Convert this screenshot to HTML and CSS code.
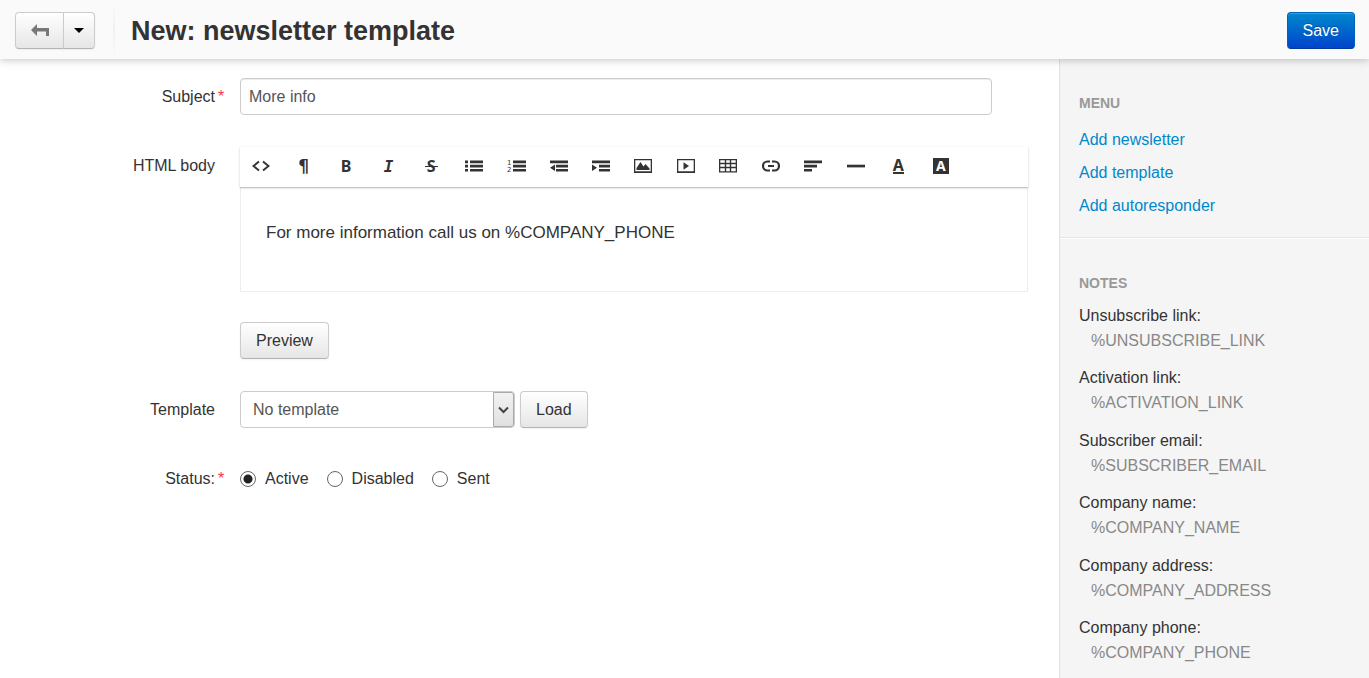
FILE: index.html
```html
<!DOCTYPE html>
<html lang="en">
<head>
<meta charset="utf-8">
<title>New: newsletter template</title>
<link rel="stylesheet" href="styles.css">
</head>
<body>
<header class="header">
  <div class="btn-group">
    <button class="btn btn-back" type="button" aria-label="Back"><svg width="18" height="14" viewBox="0 0 18 14"><path d="M0 6 6 0v4h12v8h-3V7.500H6V12z" fill="#777"/></svg></button>
    <button class="btn btn-caret" type="button" aria-label="More"><svg width="10" height="5" viewBox="0 0 10 5"><path d="M0 0h10L5 5z" fill="#000"/></svg></button>
  </div>
  <div class="separator"></div>
  <h1 class="title">New: newsletter template</h1>
  <button class="btn btn-primary" type="submit" form="template-form">Save</button>
</header>
<div class="layout">
  <main class="content">
    <form class="form" id="template-form">
      <div class="row">
        <label class="label" for="subject"><span>Subject</span><span class="required">*</span></label>
        <div class="field"><input class="input" id="subject" type="text" value="More info"></div>
      </div>
      <div class="row">
        <div class="label" id="body-label"><span>HTML body</span></div>
        <div class="field">
          <div class="toolbar" role="toolbar" aria-label="Formatting">
            <button class="tool" type="button" aria-label="HTML"><svg width="18" height="12" viewBox="0 0 18 12"><path d="M7 1.500 1.500 6 7 10.500M11 1.500 16.500 6 11 10.500" fill="none" stroke="#333" stroke-width="1.900"/></svg></button>
            <button class="tool tool-pilcrow" type="button" aria-label="Format">¶</button>
            <button class="tool tool-letter" type="button" aria-label="Bold">B</button>
            <button class="tool tool-letter tool-italic" type="button" aria-label="Italic">I</button>
            <button class="tool tool-letter" type="button" aria-label="Strikethrough"><span class="strike">S</span></button>
            <button class="tool" type="button" aria-label="Bulleted list"><svg width="18" height="12" viewBox="0 0 18 12"><path d="M0 .5h3v2.700H0zM0 4.700h3v2.700H0zM0 8.900h3v2.700H0zM5 .5h13v2.700H5zM5 4.700h13v2.700H5zM5 8.900h13v2.700H5z" fill="#333"/></svg></button>
            <button class="tool" type="button" aria-label="Numbered list"><svg class="numbered" width="19" height="12" viewBox="0 0 19 12"><path d="M6 .5h13v2.700H6zM6 4.700h13v2.700H6zM6 8.900h13v2.700H6z" fill="#333"/><text x="0" y="5">1</text><text x="0" y="12">2</text></svg></button>
            <button class="tool" type="button" aria-label="Outdent"><svg width="18" height="12" viewBox="0 0 18 12"><path d="M0 .5h18v2.700H0zM6 4.700h12v2.700H6zM6 8.900h12v2.700H6zM5 4.500v6.500L0 7.700z" fill="#333"/></svg></button>
            <button class="tool" type="button" aria-label="Indent"><svg width="18" height="12" viewBox="0 0 18 12"><path d="M0 .5h18v2.700H0zM7 4.700h11v2.700H7zM7 8.900h11v2.700H7zM0 4.500v6.500l5-3.300z" fill="#333"/></svg></button>
            <button class="tool" type="button" aria-label="Image"><svg width="18" height="14" viewBox="0 0 18 14"><path d="M0 0h18v14H0zM1.300 1.300v11h15.400v-11z" fill="#333" fill-rule="evenodd"/><path d="M2.500 11V9l4-6 3 4.500L11.500 5 15.500 9.500V11z" fill="#333"/></svg></button>
            <button class="tool" type="button" aria-label="Video"><svg width="18" height="14" viewBox="0 0 18 14"><path d="M0 0h18v14H0zM1.300 1.300v11h15.400v-11z" fill="#333" fill-rule="evenodd"/><path d="M6.500 3.300v7.400l5.500-3.700z" fill="#333"/></svg></button>
            <button class="tool" type="button" aria-label="Table"><svg width="18" height="14" viewBox="0 0 18 14"><path d="M.6.6h16.800v12.300H.6zM0 4.500h18M0 8.500h18M6.500 0v13M11.500 0v13" fill="none" stroke="#333" stroke-width="1.400"/></svg></button>
            <button class="tool" type="button" aria-label="Link"><svg width="18" height="12" viewBox="0 0 18 12"><path d="M8 1.500H5.500a4.500 4.500 0 0 0 0 9H8M10 1.500h2.500a4.500 4.500 0 0 1 0 9H10M6 6h6" fill="none" stroke="#333" stroke-width="2.200"/></svg></button>
            <button class="tool" type="button" aria-label="Alignment"><svg width="18" height="12" viewBox="0 0 18 12"><path d="M0 .5h18v2.700H0zM0 4.700h13v2.700H0zM0 8.900h8v2.700H0z" fill="#333"/></svg></button>
            <button class="tool" type="button" aria-label="Horizontal rule"><svg width="18" height="12" viewBox="0 0 18 12"><path d="M0 4.700h18v2.700H0z" fill="#333"/></svg></button>
            <button class="tool tool-letter" type="button" aria-label="Font color"><span class="font-color">A</span></button>
            <button class="tool tool-letter" type="button" aria-label="Back color"><span class="back-color">A</span></button>
          </div>
          <div class="editor" contenteditable="true" role="textbox" aria-labelledby="body-label" spellcheck="false">For more information call us on %COMPANY_PHONE</div>
          <button class="btn btn-preview" type="button">Preview</button>
        </div>
      </div>
      <div class="row">
        <label class="label" for="template"><span>Template</span></label>
        <div class="field field-inline">
          <div class="select-wrap">
            <select class="select" id="template"><option>No template</option></select>
            <span class="select-arrow"><svg width="11" height="8" viewBox="0 0 11 8"><path d="M1 1.500 5.500 6 10 1.500" fill="none" stroke="#444" stroke-width="2"/></svg></span>
          </div>
          <button class="btn" type="button">Load</button>
        </div>
      </div>
      <div class="row" role="radiogroup" aria-labelledby="status-label">
        <div class="label" id="status-label"><span>Status:</span><span class="required">*</span></div>
        <div class="field field-radios">
          <label class="option"><input class="radio" type="radio" name="status" checked>Active</label>
          <label class="option"><input class="radio" type="radio" name="status">Disabled</label>
          <label class="option"><input class="radio" type="radio" name="status">Sent</label>
        </div>
      </div>
    </form>
  </main>
  <aside class="sidebar">
    <nav class="menu">
      <h2 class="heading">MENU</h2>
      <ul class="links">
        <li><a class="link" href="#">Add newsletter</a></li>
        <li><a class="link" href="#">Add template</a></li>
        <li><a class="link" href="#">Add autoresponder</a></li>
      </ul>
    </nav>
    <section class="notes">
      <h2 class="heading">NOTES</h2>
      <dl class="note-list">
        <div class="note"><dt>Unsubscribe link:</dt><dd>%UNSUBSCRIBE_LINK</dd></div>
        <div class="note"><dt>Activation link:</dt><dd>%ACTIVATION_LINK</dd></div>
        <div class="note"><dt>Subscriber email:</dt><dd>%SUBSCRIBER_EMAIL</dd></div>
        <div class="note"><dt>Company name:</dt><dd>%COMPANY_NAME</dd></div>
        <div class="note"><dt>Company address:</dt><dd>%COMPANY_ADDRESS</dd></div>
        <div class="note"><dt>Company phone:</dt><dd>%COMPANY_PHONE</dd></div>
      </dl>
    </section>
  </aside>
</div>
</body>
</html>
```

FILE: styles.css
```css
* { box-sizing: border-box; }

body {
  margin: 0;
  min-height: 100vh;
  display: flex;
  flex-direction: column;
  background: #fff;
  color: #333;
  font-family: "Liberation Sans", Arial, sans-serif;
  font-size: 16px;
  line-height: 25px;
}

button, input, select { font: inherit; }

/* Header */
.header {
  position: relative;
  display: flex;
  align-items: center;
  height: 59px;
  padding: 2px 14px 0 15px;
  background: #fafafa;
  box-shadow: 0 1px 8px rgba(0, 0, 0, 0.24);
}
.separator {
  width: 2px;
  align-self: stretch;
  margin: 0 16px 0 18px;
  background: linear-gradient(#fafafa, #f0f0f0, #fafafa);
}
.title {
  flex: 1;
  margin: 0;
  font-size: 27px;
  line-height: 36px;
}

/* Buttons */
.btn {
  height: 37px;
  padding: 0 15px;
  border: 1px solid #ccc;
  border-bottom-color: #b3b3b3;
  border-radius: 4px;
  background: linear-gradient(#fff, #e6e6e6);
  box-shadow: 0 1px 2px rgba(0, 0, 0, 0.05);
  color: #333;
}
.btn-group { display: flex; }
.btn-group .btn { padding: 0; }
.btn-back { width: 49px; border-radius: 4px 0 0 4px; }
.btn-caret { width: 32px; margin-left: -1px; border-radius: 0 4px 4px 0; }
.btn-group svg { display: block; margin: 0 auto; }
.btn-primary {
  border-color: #0062b8 #0062b8 #003a9e;
  background: linear-gradient(#0088cc, #0044cc);
  box-shadow: inset 0 1px 0 rgba(255, 255, 255, 0.2);
  color: #fff;
  text-shadow: 0 -1px 0 rgba(0, 0, 0, 0.25);
}
.btn-preview { margin-top: 30px; }

/* Page columns */
.layout { display: flex; flex: 1; }
.content { flex: 1; min-width: 0; padding: 19px 31px 0 0; }
.sidebar {
  width: 310px;
  background: #f5f5f5;
  border-left: 1px solid #e2e2e2;
}

/* Form */
.form { display: flex; flex-direction: column; gap: 32px; }
.row { display: grid; grid-template-columns: 240px 1fr; }
.label {
  display: grid;
  grid-template-columns: 1fr 22px;
  column-gap: 3px;
  align-self: start;
  line-height: 37px;
  text-align: right;
}
.required { color: #f34; text-align: left; }
.input {
  display: block;
  width: calc(100% - 36px);
  height: 37px;
  padding: 0 8px;
  border: 1px solid #ccc;
  border-radius: 4px;
  box-shadow: inset 0 1px 1px rgba(0, 0, 0, 0.075);
  color: #555;
}

/* Rich text editor */
.toolbar {
  position: relative;
  display: grid;
  grid-template-columns: repeat(17, 1fr);
  height: 40px;
  padding: 0 66px 2px 0;
  background: #fff;
  box-shadow: 0 1px 3px rgba(0, 0, 0, 0.12), 0 1px 1px rgba(0, 0, 0, 0.16);
}
.tool {
  display: flex;
  align-items: center;
  justify-content: center;
  padding: 0;
  border: 0;
  background: none;
  color: #333;
}
.tool-pilcrow { font: bold 17px "DejaVu Sans", sans-serif; }
.tool-letter { font: bold 16px "Noto Sans", sans-serif; }
.tool-italic { font: italic bold 16px "DejaVu Sans Mono", monospace; }
.strike { position: relative; }
.strike::before {
  content: "";
  position: absolute;
  top: 50%;
  left: -2px;
  right: -2px;
  height: 1px;
  background: #333;
}
.numbered { font: 7px "DejaVu Sans", sans-serif; fill: #333; overflow: visible; }
.font-color { border-bottom: 2px solid #333; line-height: 13px; }
.back-color {
  width: 16px;
  background: #333;
  color: #fff;
  font-size: 14px;
  line-height: 16px;
}
.editor {
  min-height: 105px;
  padding: 33px 25px;
  border: 1px solid #eee;
  border-top: 0;
  font-size: 17px;
}

.field-inline { display: flex; gap: 5px; }
.select-wrap { position: relative; width: 275px; }
.select {
  width: 100%;
  height: 37px;
  padding: 0 30px 0 12px;
  border: 1px solid #ccc;
  border-radius: 4px;
  background: #fff;
  color: #555;
  appearance: none;
}
.select-arrow {
  position: absolute;
  top: 1px;
  right: 1px;
  bottom: 1px;
  display: flex;
  align-items: center;
  justify-content: center;
  width: 21px;
  border: 1px solid #aaa;
  border-radius: 0 3px 3px 0;
  background: linear-gradient(#f2f2f2, #e0e0e0);
  pointer-events: none;
}

.field-radios { display: flex; gap: 18px; }
.option { display: flex; align-items: center; gap: 9px; }
.radio {
  width: 16px;
  height: 16px;
  margin: 0;
  border: 1px solid #666;
  border-radius: 50%;
  background: #fff;
  appearance: none;
}
.radio:checked { background: radial-gradient(circle, #222 4px, #fff 5px); }

/* Sidebar */
.menu, .notes { padding: 32px 19px 0; }
.menu { padding-bottom: 15px; border-bottom: 1px solid #e5e5e5; }
.notes { border-top: 1px solid #fff; padding-bottom: 12px; }
.heading {
  margin: 0;
  color: #999;
  font-size: 14px;
  line-height: 25px;
}
.links { margin: 7px 0 0; padding: 0; list-style: none; line-height: 33px; }
.link { color: #08c; text-decoration: none; }
.note-list { margin: 7px 0 0; }
.note { margin-bottom: 12px; }
.note:nth-child(even) { margin-bottom: 13px; }
.note:last-child { margin-bottom: 0; }
.note dd { margin: 0 0 0 12px; color: #888; }
```
